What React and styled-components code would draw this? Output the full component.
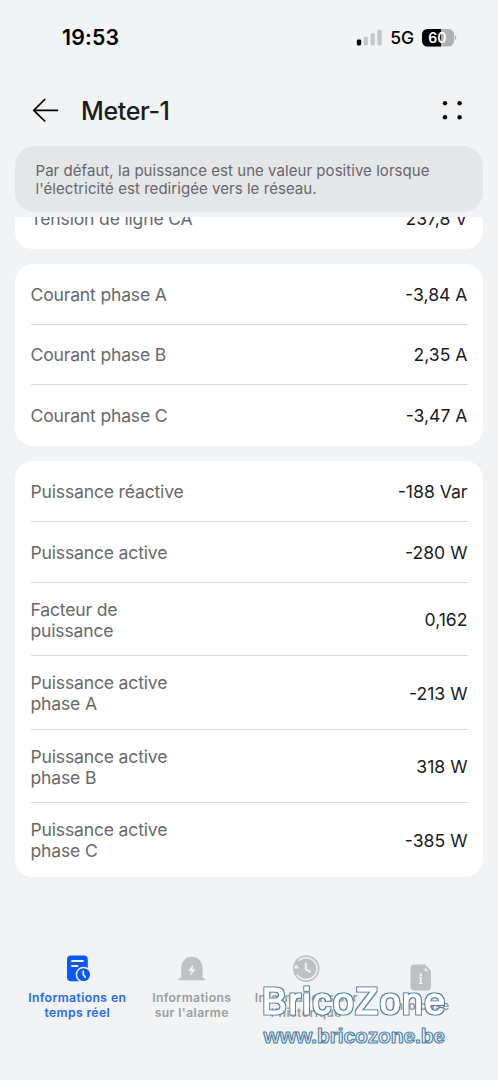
import styled, { createGlobalStyle } from 'styled-components';

const GlobalStyle = createGlobalStyle`
  * {
    box-sizing: border-box;
  }

  body {
    margin: 0;
    background: #f1f3f5;
    font-family: Inter, 'Liberation Sans', sans-serif;
    color: #1b1c1e;
  }
`;

const Screen = styled.div`
  position: relative;
  width: 498px;
  height: 1080px;
  overflow: hidden;
  display: flex;
  flex-direction: column;
  background: #f1f3f5;
`;

const StatusBar = styled.div`
  height: 75px;
  flex-shrink: 0;
  display: flex;
  align-items: center;
  justify-content: space-between;
  padding: 0 41px 1px 62px;
  color: #000;
`;

const Clock = styled.span`
  font-size: 21.3px;
  font-weight: 600;
  letter-spacing: 0.2px;
`;

const StatusIcons = styled.div`
  display: flex;
  align-items: center;
  gap: 8px;
  padding-top: 1px;

  svg {
    display: block;
  }
`;

const Network = styled.span`
  font-size: 17.5px;
  font-weight: 450;
  letter-spacing: -0.1px;
`;

const Header = styled.header`
  height: 70px;
  flex-shrink: 0;
  display: flex;
  align-items: center;
  padding: 0 34px 0 32px;

  svg {
    display: block;
  }
`;

const Title = styled.h1`
  flex: 1;
  margin: 1px 0 0 22px;
  font-size: 25px;
  font-weight: 450;
  line-height: 32px;
  letter-spacing: -0.35px;
`;

const Notice = styled.p`
  height: 66px;
  flex-shrink: 0;
  margin: 1px 15px 5px;
  padding: 15.5px 20.5px;
  border-radius: 20px;
  background: #e5e6e8;
  color: #65676a;
  font-size: 15px;
  line-height: 18px;
  letter-spacing: 0.05px;
  white-space: pre-line;
`;

const Scroller = styled.main`
  height: 700px;
  flex-shrink: 0;
  overflow: hidden;
  padding: 0 15px;
`;

const Card = styled.section`
  margin-top: ${props => (props.$scrolled ? '-29.1px' : '15.1px')};
  padding: 0 15.5px;
  border-radius: 18px;
  background: #fff;
`;

const Row = styled.div`
  height: ${props => (props.$tall ? 73.5 : 60.8)}px;
  display: flex;
  align-items: center;
  justify-content: space-between;
  padding-top: 1px;
  border-bottom: 1px solid #d9d9da;
  font-size: 17.6px;
  line-height: 21px;

  &:last-child {
    border-bottom-color: transparent;
  }
`;

const Label = styled.span`
  color: #69696a;
  white-space: pre-line;
  letter-spacing: -0.19px;
`;

const Value = styled.span`
  color: #1b1c1e;
`;

const TabBar = styled.nav`
  flex: 1;
  display: flex;
  padding: 36px 20px 0;
`;

const Tab = styled.div`
  width: 114.5px;
  height: 69px;
  display: flex;
  flex-direction: column;
  align-items: center;
  justify-content: center;
  gap: 7px;
  color: ${props => (props.$active ? '#0a59f7' : '#bfc0c2')};

  svg {
    display: block;
  }
`;

const TabLabel = styled.span`
  color: ${props => (props.$active ? '#2468f2' : '#9b9c9e')};
  font-size: 12.2px;
  font-weight: 600;
  line-height: 15px;
  letter-spacing: 0.38px;
  text-align: center;
  white-space: pre;
`;

const Watermark = styled.svg`
  position: absolute;
  left: 250px;
  top: 975px;
  font-family: 'Liberation Sans', Arial, sans-serif;
  stroke-linejoin: round;
`;

const groups = [
  [{ label: 'Tension de ligne CA', value: '237,8 V' }],
  [
    { label: 'Courant phase A', value: '-3,84 A' },
    { label: 'Courant phase B', value: '2,35 A' },
    { label: 'Courant phase C', value: '-3,47 A' },
  ],
  [
    { label: 'Puissance réactive', value: '-188 Var' },
    { label: 'Puissance active', value: '-280 W' },
    { label: 'Facteur de\npuissance', value: '0,162' },
    { label: 'Puissance active\nphase A', value: '-213 W' },
    { label: 'Puissance active\nphase B', value: '318 W' },
    { label: 'Puissance active\nphase C', value: '-385 W' },
  ],
];

const SignalIcon = () => (
  <svg width="26" height="17" viewBox="0 0 26 17">
    <rect x="0.8" y="10.5" width="4.4" height="6" rx="1.4" fill="#000" />
    <rect x="7.7" y="7.7" width="4.2" height="8.8" rx="1.4" fill="#c5c6c8" />
    <rect x="14.6" y="4.3" width="4.2" height="12.2" rx="1.4" fill="#c5c6c8" />
    <rect x="21.4" y="0.8" width="4.3" height="15.7" rx="1.4" fill="#c5c6c8" />
  </svg>
);

const BatteryIcon = () => (
  <svg width="35" height="18" viewBox="0 0 35 18">
    <rect width="32" height="17.5" rx="5.5" fill="#afb0b1" />
    <path d="M5.5 0H19v17.5H5.5A5.5 5.5 0 0 1 0 12V5.500A5.500 5.500 0 0 1 5.500 0Z" fill="#000" />
    <path d="M32.800 6c2 .9 2 4.300 0 5.200Z" fill="#afb0b1" />
    <text x="15.300" y="13.800" fill="#fff" fontSize="14" fontWeight="600" textAnchor="middle">
      60
    </text>
  </svg>
);

const BackIcon = () => (
  <svg width="27" height="24" viewBox="0 0 27 24">
    <path
      d="M12.700 1.500 1.700 12.300l11 10.700M1.700 12.300h23.800"
      fill="none"
      stroke="#000"
      strokeWidth="1.700"
      strokeLinecap="round"
      strokeLinejoin="round"
    />
  </svg>
);

const MoreIcon = () => (
  <svg width="24" height="24" viewBox="0 0 24 24">
    <circle cx="5" cy="5.300" r="2.200" />
    <circle cx="19.600" cy="5.300" r="2.200" />
    <circle cx="5" cy="19.200" r="2.200" />
    <circle cx="19.600" cy="19.200" r="2.200" />
  </svg>
);

const RealtimeIcon = () => (
  <svg width="28" height="28" viewBox="0 0 28 28">
    <rect x="4" y="0.500" width="20.800" height="25.800" rx="4" fill="currentColor" />
    <path d="M9 6h11M9 11h5.500" stroke="#f1f3f5" strokeWidth="1.800" strokeLinecap="round" />
    <circle cx="20.600" cy="19.600" r="7.200" fill="currentColor" stroke="#f1f3f5" strokeWidth="1.500" />
    <path d="M20.300 16v3.800l2 2.300" fill="none" stroke="#f1f3f5" strokeWidth="1.700" strokeLinecap="round" />
  </svg>
);

const AlarmIcon = () => (
  <svg width="28" height="28" viewBox="0 0 28 28">
    <path
      d="M3.200 23.300V12.500a10.700 10.700 0 0 1 21.400 0v10.800H26a1 1 0 0 1 0 2H1.300a1 1 0 0 1 0-2Z"
      fill="currentColor"
    />
    <path
      d="m14.900 10.100-4.400 5.600h3l-.8 4.200 4.400-5.700h-3Z"
      fill="#f1f3f5"
      stroke="#f1f3f5"
      strokeWidth="0.600"
      strokeLinejoin="round"
    />
  </svg>
);

const HistoryIcon = () => (
  <svg width="28" height="28" viewBox="0 0 28 28">
    <circle cx="14.200" cy="13.600" r="13.300" fill="currentColor" />
    <path d="M6.500 5.800a10.900 10.900 0 1 1-1.600 13.600" fill="none" stroke="#f1f3f5" strokeWidth="1.500" />
    <path d="M1.500 13.600 4.300 9.500l3 3.700Z" fill="#f1f3f5" />
    <path d="M13.800 8.400v5.800l4.300 2.700" fill="none" stroke="#f1f3f5" strokeWidth="1.900" strokeLinecap="round" />
  </svg>
);

const InfoIcon = () => (
  <svg width="28" height="28" viewBox="0 0 28 28">
    <path
      d="M7.200 1.500H18l6 6.200v16a3.700 3.700 0 0 1-3.700 3.700H7.200a3.700 3.700 0 0 1-3.700-3.700V5.200a3.700 3.700 0 0 1 3.700-3.700Z"
      fill="currentColor"
    />
    <path d="M17.700 4.500V8h3.600Z" fill="#f1f3f5" />
    <circle cx="13.700" cy="11.800" r="1.300" fill="#f1f3f5" />
    <path d="M12.200 14.600h1.500v5.500M12 20.200h3.500" fill="none" stroke="#f1f3f5" strokeWidth="1.500" />
  </svg>
);

const tabs = [
  { label: 'Informations en\ntemps réel', icon: RealtimeIcon, active: true },
  { label: "Informations\nsur l'alarme", icon: AlarmIcon },
  { label: "Informations sur\nl'historique", icon: HistoryIcon },
  { label: 'Info base', icon: InfoIcon },
];

const App = () => {
  return (
    <>
      <GlobalStyle />
      <Screen>
        <StatusBar>
          <Clock>19:53</Clock>
          <StatusIcons>
            <SignalIcon />
            <Network>5G</Network>
            <BatteryIcon />
          </StatusIcons>
        </StatusBar>
        <Header>
          <BackIcon />
          <Title>Meter-1</Title>
          <MoreIcon />
        </Header>
        <Notice>
          {"Par défaut, la puissance est une valeur positive lorsque\nl'électricité est redirigée vers le réseau."}
        </Notice>
        <Scroller>
          {groups.map((rows, index) => (
            <Card key={index} $scrolled={index === 0}>
              {rows.map(row => (
                <Row key={row.label} $tall={row.label.includes('\n')}>
                  <Label>{row.label}</Label>
                  <Value>{row.value}</Value>
                </Row>
              ))}
            </Card>
          ))}
        </Scroller>
        <TabBar>
          {tabs.map(({ label, icon: Icon, active }) => (
            <Tab key={label} $active={active}>
              <Icon />
              <TabLabel $active={active}>{label}</TabLabel>
            </Tab>
          ))}
        </TabBar>
        <Watermark width="210" height="80" viewBox="0 0 210 80">
          <defs>
            {/* keeps the outline outside of the white letters */}
            <filter id="outline" x="-5%" y="-20%" width="110%" height="140%">
              <feMorphology in="SourceAlpha" operator="dilate" radius="1" result="grown" />
              <feFlood floodColor="#4a80a8" />
              <feComposite in2="grown" operator="in" result="edge" />
              <feMerge>
                <feMergeNode in="edge" />
                <feMergeNode in="SourceGraphic" />
              </feMerge>
            </filter>
          </defs>
          <text
            x="12"
            y="38.500"
            fontSize="37"
            textLength="183"
            fill="#fff"
            stroke="#fff"
            strokeWidth="1.200"
            filter="url(#outline)"
          >
            BricoZone
          </text>
          <text
            x="13.500"
            y="68"
            fontSize="21"
            fontWeight="700"
            textLength="181.500"
            fill="#edf3f7"
            stroke="#4a80a8"
            strokeWidth="1.100"
          >
            www.bricozone.be
          </text>
        </Watermark>
      </Screen>
    </>
  );
};

export default App;
